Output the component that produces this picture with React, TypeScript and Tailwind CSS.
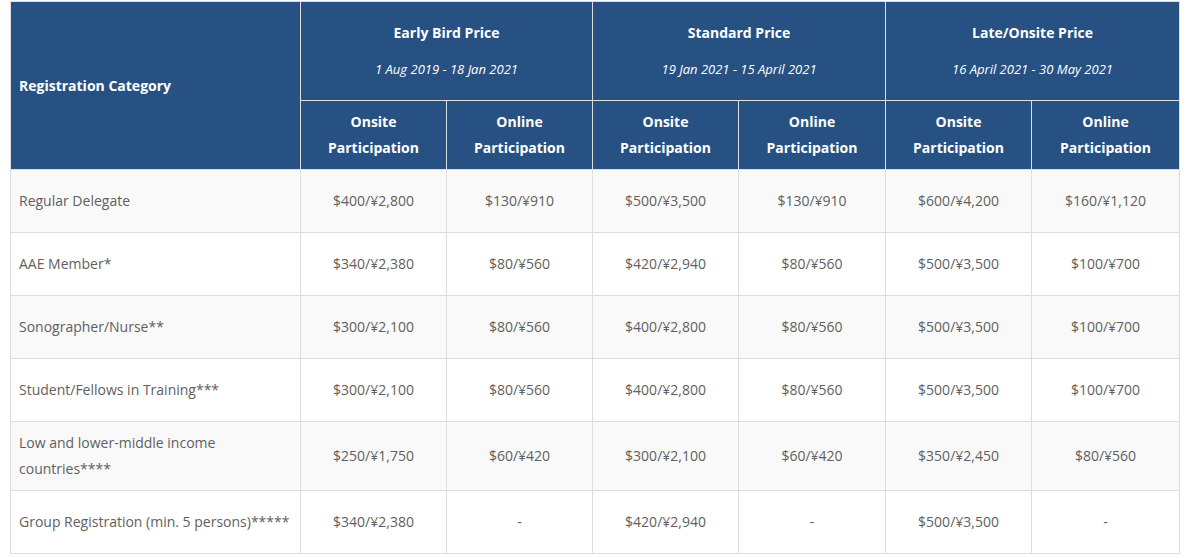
import React from 'react';

interface PriceRow {
  category: string;
  prices: string[];
  tall?: boolean;
}

const rows: PriceRow[] = [
  { category: 'Regular Delegate', prices: ['$400/¥2,800', '$130/¥910', '$500/¥3,500', '$130/¥910', '$600/¥4,200', '$160/¥1,120'] },
  { category: 'AAE Member*', prices: ['$340/¥2,380', '$80/¥560', '$420/¥2,940', '$80/¥560', '$500/¥3,500', '$100/¥700'] },
  { category: 'Sonographer/Nurse**', prices: ['$300/¥2,100', '$80/¥560', '$400/¥2,800', '$80/¥560', '$500/¥3,500', '$100/¥700'] },
  { category: 'Student/Fellows in Training***', prices: ['$300/¥2,100', '$80/¥560', '$400/¥2,800', '$80/¥560', '$500/¥3,500', '$100/¥700'] },
  { category: 'Low and lower-middle income countries****', prices: ['$250/¥1,750', '$60/¥420', '$300/¥2,100', '$60/¥420', '$350/¥2,450', '$80/¥560'], tall: true },
  { category: 'Group Registration (min. 5 persons)*****', prices: ['$340/¥2,380', '-', '$420/¥2,940', '-', '$500/¥3,500', '-'] },
];

const periods = [
  { title: 'Early Bird Price', dates: '1 Aug 2019 - 18 Jan 2021' },
  { title: 'Standard Price', dates: '19 Jan 2021 - 15 April 2021' },
  { title: 'Late/Onsite Price', dates: '16 April 2021 - 30 May 2021' },
];

const colWidths = ['w-[290px]', 'w-[146px]', 'w-[146px]', 'w-[146px]', 'w-[147px]', 'w-[146px]', 'w-[148px]'];

const App: React.FC = () => {
  return (
    <div className="bg-white pl-[10px] pt-px" style={{ fontFamily: '"Open Sans", "Noto Sans", Arial, sans-serif' }}>
      <table className="border-collapse table-fixed w-[1170px] text-[14px]">
        <colgroup>
          {colWidths.map((w, i) => (
            <col key={i} className={w} />
          ))}
        </colgroup>
        <thead className="bg-[#285183] text-white">
          <tr className="h-[99px]">
            <th rowSpan={2} className="border border-[#dddddd] px-2 text-left font-bold leading-[26px]">
              Registration Category
            </th>
            {periods.map((p) => (
              <th key={p.title} colSpan={2} className="border border-[#dddddd] px-2 pb-[4px] text-center">
                <div className="font-bold leading-[26px]">{p.title}</div>
                <div className="italic font-normal text-[13px] leading-[20px] mt-[13px]">{p.dates}</div>
              </th>
            ))}
          </tr>
          <tr className="h-[69px]">
            {periods.map((p) => (
              <React.Fragment key={p.title}>
                <th className="border border-[#dddddd] px-2 text-center font-bold leading-[26px]">
                  Onsite
                  <br />
                  Participation
                </th>
                <th className="border border-[#dddddd] px-2 text-center font-bold leading-[26px]">
                  Online
                  <br />
                  Participation
                </th>
              </React.Fragment>
            ))}
          </tr>
        </thead>
        <tbody className="text-[#606060]">
          {rows.map((row, i) => (
            <tr key={row.category} className={`${i % 2 === 0 ? 'bg-[#f9f9f9]' : 'bg-white'} ${row.tall ? 'h-[69px]' : 'h-[63px]'}`}>
              <td className="border border-[#dddddd] px-2 leading-[26px]">{row.category}</td>
              {row.prices.map((p, j) => (
                <td key={j} className="border border-[#dddddd] px-2 text-center leading-[26px]">
                  {p}
                </td>
              ))}
            </tr>
          ))}
        </tbody>
      </table>
    </div>
  );
};

export default App;
